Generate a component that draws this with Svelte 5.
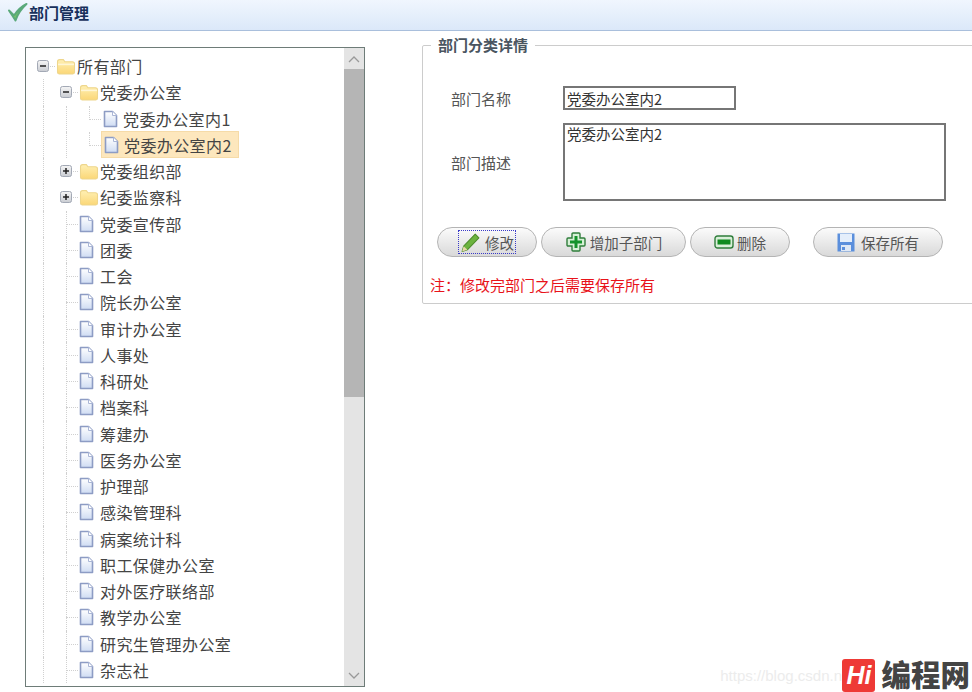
<script>
  const children = ['党委宣传部', '团委', '工会', '院长办公室', '审计办公室', '人事处', '科研处', '档案科', '筹建办', '医务办公室', '护理部', '感染管理科', '病案统计科', '职工保健办公室', '对外医疗联络部', '教学办公室', '研究生管理办公室', '杂志社'];

  const rows = [
    { name: '所有部门', level: 0, kind: 'open', toggle: 'minus' },
    { name: '党委办公室', level: 1, kind: 'open', toggle: 'minus' },
    { name: '党委办公室内1', level: 2, kind: 'file', elbow: 'mid' },
    { name: '党委办公室内2', level: 2, kind: 'file', elbow: 'end', selected: true },
    { name: '党委组织部', level: 1, kind: 'closed', toggle: 'plus' },
    { name: '纪委监察科', level: 1, kind: 'closed', toggle: 'plus' },
    ...children.map((name) => ({ name, level: 1, kind: 'file' }))
  ];
</script>

{#snippet fileIcon()}
  <svg class="icon file" width="15" height="18" viewBox="0 0 15 18">
    <path d="M1.500 1.500h8l4 4v11h-12z" fill="url(#fileFill)" stroke="#8d9cc4" stroke-width="1.600" stroke-linejoin="round"/>
    <path d="M9.500 1.500v4h4" fill="#fff" stroke="#aab6d6"/>
  </svg>
{/snippet}

{#snippet folderIcon(open)}
  <svg class="icon folder" width="20" height="17" viewBox="0 0 18 16">
    <path d="M1 3.500q0-2 2-2h3.500l1.500 2h7q2 0 2 2v8q0 1.500-1.500 1.500h-13q-1.500 0-1.500-1.500z" fill="url(#folderFill)" stroke="#eed68c"/>
    {#if open}
      <path d="M1.500 6h15" stroke="#fff6d6" stroke-width="1.500"/>
    {/if}
  </svg>
{/snippet}

<svg class="defs" width="0" height="0">
  <defs>
    <linearGradient id="fileFill" x1="0" y1="0" x2="0" y2="1">
      <stop offset="0" stop-color="#ffffff"/>
      <stop offset="1" stop-color="#cfdcf3"/>
    </linearGradient>
    <linearGradient id="folderFill" x1="0" y1="0" x2="0" y2="1">
      <stop offset="0" stop-color="#fff0b4"/>
      <stop offset="1" stop-color="#fbd777"/>
    </linearGradient>
    <linearGradient id="toggleFill" x1="0" y1="0" x2="0" y2="1">
      <stop offset="0" stop-color="#f6f6f6"/>
      <stop offset="1" stop-color="#c9ccd2"/>
    </linearGradient>
  </defs>
</svg>

<div class="page">
  <header class="title-bar">
    <svg width="22" height="22" viewBox="0 0 22 22">
      <path d="M7 13.500 L3 9.500 L7 15.500 L9.500 19.500 C11.500 13 15.500 7.500 20.500 3 C15.500 5.500 11.500 9.500 8.500 14 Z" fill="#74c765" stroke="#5aa97a" stroke-width="2" stroke-linejoin="round"/>
    </svg>
    <h1>部门管理</h1>
  </header>

  <main class="content">
    <div class="tree-panel">
      <div class="tree">
        {#each rows as row}
          <div class="row">
            {#each Array(row.level) as _}
              <span class="indent"></span>
            {/each}
            {#if row.level === 2}
              <span class="elbow-cell"></span>
            {:else}
              <span class="toggle-cell" class:leaf={!row.toggle}>
                {#if row.toggle}
                  <svg width="12" height="12" viewBox="0 0 12 12">
                    <rect x="0.500" y="0.500" width="11" height="11" rx="2" fill="url(#toggleFill)" stroke="#a3a9b5"/>
                    <path d="M3 6h6" stroke="#222" stroke-width="1.500"/>
                    {#if row.toggle === 'plus'}
                      <path d="M6 3v6" stroke="#222" stroke-width="1.500"/>
                    {/if}
                  </svg>
                {/if}
              </span>
            {/if}
            <span class="node" class:selected={row.selected} class:deep={row.level === 2}>
              {#if row.kind === 'file'}
                {@render fileIcon()}
              {:else}
                {@render folderIcon(row.kind === 'open')}
              {/if}
              <span class="label">{row.name}</span>
            </span>
          </div>
        {/each}
      </div>
      <div class="scrollbar">
        <div class="arrow">
          <svg width="12" height="8" viewBox="0 0 12 8"><path d="M1 7l5-5 5 5" fill="none" stroke="#999" stroke-width="1.300"/></svg>
        </div>
        <div class="thumb"></div>
        <div class="track"></div>
        <div class="arrow">
          <svg width="12" height="8" viewBox="0 0 12 8"><path d="M1 1l5 5 5-5" fill="none" stroke="#999" stroke-width="1.300"/></svg>
        </div>
      </div>
    </div>

    <fieldset class="detail">
      <legend>部门分类详情</legend>
      <div class="field name-field">
        <span class="field-label">部门名称</span>
        <input type="text" value="党委办公室内2" />
      </div>
      <div class="field desc-field">
        <span class="field-label">部门描述</span>
        <textarea>党委办公室内2</textarea>
      </div>

      <div class="actions">
        <button class="btn edit">
          <span class="focus-box">
            <svg width="21" height="21" viewBox="0 0 20 20">
              <path d="M2 18.500l1.500-5L14.500 2l3.500 3.500L7 17z" fill="#6cb33f" stroke="#4c8c2b" stroke-linejoin="round"/>
              <path d="M2 18.500l1.500-5 3.500 3.500z" fill="#e8d7a8"/>
            </svg>
            修改
          </span>
        </button>
        <button class="btn add">
          <svg width="22" height="22" viewBox="0 0 22 22">
            <path d="M8 2h6a1 1 0 0 1 1 1v4h4a1 1 0 0 1 1 1v6a1 1 0 0 1-1 1h-4v4a1 1 0 0 1-1 1H8a1 1 0 0 1-1-1v-4H3a1 1 0 0 1-1-1V8a1 1 0 0 1 1-1h4V3a1 1 0 0 1 1-1z" fill="#d6f0d6" stroke="#2f7d3b" stroke-width="1.400"/>
            <path d="M9.500 5h3v4.500H17v3h-4.500V17h-3v-4.500H5v-3h4.500z" fill="#14932b"/>
          </svg>
          增加子部门
        </button>
        <button class="btn remove">
          <svg width="20" height="14" viewBox="0 0 20 14">
            <rect x="1" y="1" width="18" height="12" rx="2.500" fill="#d9efd9" stroke="#2f7d3b" stroke-width="1.400"/>
            <rect x="3.500" y="4.500" width="13" height="5" fill="#0f8a1f"/>
          </svg>
          删除
        </button>
        <button class="btn save">
          <svg width="18" height="19" viewBox="0 0 18 19">
            <rect x="0.500" y="0.500" width="17" height="18" fill="#5b8fdc"/>
            <rect x="3" y="1" width="12" height="8" fill="#e4eefb"/>
            <rect x="4" y="12" width="10" height="6" fill="#dfe8f5"/>
            <rect x="5" y="14" width="3" height="3" fill="#5b8fdc"/>
          </svg>
          保存所有
        </button>
      </div>

      <p class="note">注：修改完部门之后需要保存所有</p>
    </fieldset>
  </main>

  <div class="watermark">
    <span class="blog">https://blog.csdn.n</span>
    <span class="logo-mark">Hi</span>
    <span class="logo-text">编程网</span>
  </div>
</div>

<style>
  :global(body) {
    background: #fff;
    font-family: "Noto Sans CJK SC", "Liberation Sans", sans-serif;
  }

  .defs {
    position: absolute;
  }

  .page {
    position: relative;
    height: 692px;
    overflow: hidden;
    color: #444;
  }

  .title-bar {
    display: flex;
    align-items: center;
    gap: 1px;
    height: 24px;
    padding: 0 0 6px 6px;
    background: linear-gradient(#f0f6fe, #dbe8f9);
    border-bottom: 1px solid #a9bfdc;
    box-sizing: content-box;
  }

  h1 {
    margin: 0;
    font-size: 15px;
    font-weight: 700;
    color: #17305c;
  }

  .content {
    display: flex;
    padding: 16px 0 0 25px;
  }

  .tree-panel {
    display: flex;
    flex: none;
    width: 340px;
    height: 640px;
    box-sizing: border-box;
    border: 1px solid #6e7c78;
    overflow: hidden;
  }

  .tree {
    flex: 1;
    padding: 5px 0 0 11px;
    overflow: hidden;
  }

  .row {
    display: flex;
    align-items: center;
    height: 26.25px;
    font-size: 16px;
    letter-spacing: 0.4px;
    white-space: nowrap;
  }

  .indent {
    position: relative;
    flex: none;
    width: 23px;
    height: 100%;
  }

  .indent::before {
    content: '';
    position: absolute;
    left: 6px;
    top: 0;
    bottom: 0;
    border-left: 1px dotted #d0d0d0;
  }

  .toggle-cell {
    position: relative;
    flex: none;
    display: flex;
    align-items: center;
    width: 20px;
    height: 100%;
  }

  .toggle-cell svg {
    position: relative;
    z-index: 1;
  }

  .toggle-cell.leaf::before {
    content: '';
    position: absolute;
    left: 6px;
    top: 0;
    bottom: 0;
    border-left: 1px dotted #d0d0d0;
  }

  .toggle-cell::after {
    content: '';
    position: absolute;
    left: 6px;
    width: 12px;
    top: 50%;
    border-top: 1px dotted #d0d0d0;
  }

  .elbow-cell {
    position: relative;
    flex: none;
    width: 20px;
    height: 100%;
  }

  .elbow-cell::before {
    content: '';
    position: absolute;
    left: 6px;
    top: 0;
    height: 50%;
    width: 11px;
    border-left: 1px dotted #d0d0d0;
    border-bottom: 1px dotted #d0d0d0;
  }

  .node {
    display: flex;
    align-items: center;
    margin-left: -1px;
  }

  .node.deep {
    margin-left: 0;
    gap: 5px;
  }

  .node.selected {
    height: 27px;
    margin-left: -2px;
    padding: 0 6px 0 2px;
    box-sizing: border-box;
    background: #fde7bd;
    border: 1px solid #f6dba8;
  }

  .icon {
    flex: none;
  }

  .icon.file {
    margin-right: 6px;
  }

  .node.deep .icon.file {
    margin: 0;
  }

  .icon.folder {
    margin-right: 1px;
  }

  .scrollbar {
    display: flex;
    flex-direction: column;
    flex: none;
    width: 20px;
    background: #e4e4e4;
  }

  .arrow {
    display: flex;
    align-items: center;
    justify-content: center;
    flex: none;
    height: 21px;
  }

  .thumb {
    flex: none;
    height: 328px;
    background: #b5b5b5;
  }

  .track {
    flex: 1;
  }

  .detail {
    flex: none;
    align-self: flex-start;
    width: 620px;
    height: 270px;
    box-sizing: border-box;
    margin: -13px 0 0 57px;
    padding: 0;
    border: 1px solid #ccc;
    border-radius: 2px;
    min-inline-size: 0;
  }

  legend {
    margin-left: 8px;
    padding: 0 7px 2px;
    font-size: 15px;
    font-weight: 700;
    color: #4a5560;
  }

  .field {
    display: flex;
    align-items: center;
    padding-left: 28px;
    font-size: 15px;
    color: #555;
  }

  .field-label {
    flex: none;
    width: 112px;
  }

  .name-field {
    margin-top: 29px;
  }

  .desc-field {
    margin-top: 13px;
  }

  input,
  textarea {
    box-sizing: border-box;
    margin: 0;
    padding: 0 2px;
    font-family: inherit;
    font-size: 14.500px;
    color: #333;
    background: #fff;
    border: 2px solid #767676;
    border-radius: 0;
    outline: none;
  }

  input {
    width: 173px;
    height: 24px;
  }

  textarea {
    width: 383px;
    height: 78px;
    line-height: 17px;
    resize: none;
    overflow: hidden;
  }

  .actions {
    display: flex;
    margin: 26px 0 0 14px;
  }

  .btn {
    display: flex;
    align-items: center;
    justify-content: center;
    gap: 3px;
    height: 30px;
    padding: 0;
    margin-right: 4px;
    font-family: inherit;
    font-size: 14.500px;
    color: #555;
    background: linear-gradient(#fbfbfb, #d9d9d9);
    border: 1px solid #b4b4b4;
    border-radius: 15px;
  }

  .btn.edit {
    width: 100px;
  }

  .btn.add {
    width: 145px;
  }

  .btn.remove {
    width: 100px;
    margin-right: 23px;
  }

  .btn.save {
    width: 130px;
    gap: 6px;
  }

  .focus-box {
    display: flex;
    align-items: center;
    gap: 4px;
    height: 22px;
    padding: 0 1px;
    border: 1px dotted #3a3ac8;
  }

  .note {
    margin: 17px 0 0 7px;
    font-size: 15px;
    color: #e8131a;
  }

  .watermark {
    position: absolute;
    right: 0;
    top: 659px;
    display: flex;
    align-items: center;
    height: 33px;
  }

  .blog {
    position: absolute;
    right: 130px;
    font-family: "Liberation Sans", sans-serif;
    font-size: 15px;
    color: #ececec;
    white-space: nowrap;
  }

  .logo-mark {
    display: flex;
    align-items: center;
    justify-content: center;
    width: 33px;
    height: 33px;
    margin-right: 6px;
    background: #ee3a36;
    border-radius: 3px;
    font-family: "Liberation Sans", sans-serif;
    font-size: 25px;
    font-weight: 700;
    font-style: italic;
    color: #fff;
  }

  .logo-text {
    margin-right: 2px;
    font-family: "Liberation Sans", "Noto Sans CJK SC", sans-serif;
    font-size: 29.500px;
    line-height: 33px;
    font-weight: 900;
    color: #444;
  }
</style>
